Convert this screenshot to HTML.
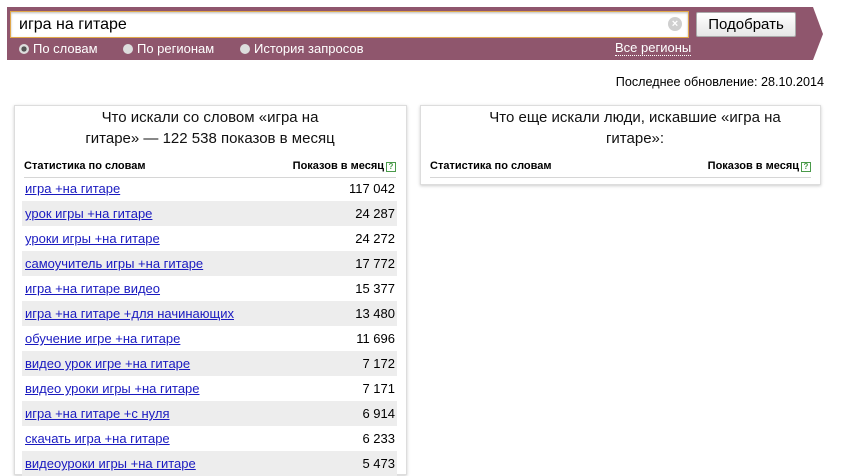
<!DOCTYPE html>
<html><head><meta charset="utf-8"><style>
*{margin:0;padding:0;box-sizing:border-box}
body{width:841px;height:464px;overflow:hidden;background:#fff;font-family:"Liberation Sans",Arial,sans-serif;position:relative;color:#000}
.a{position:absolute}
.bar{left:7px;top:7px;width:816px;height:53px;background:#8f566d;clip-path:polygon(0 0,806px 0,816px 27px,806px 53px,0 53px)}
.inp{left:10px;top:11px;width:679px;height:27px;background:#fff;border:1px solid #e0a74a;box-shadow:inset 0 1px 2px #bbb;font-size:16px;padding:4px 8px;color:#000}
.clr{left:668px;top:17px;width:14px;height:14px;border-radius:50%;background:#cfcfcf;color:#fff;font-size:11px;line-height:14px;text-align:center;font-weight:bold}
.btn{left:696px;top:12px;width:100px;height:25px;background:linear-gradient(#fff,#e6e6e6);border:1px solid #aaa;border-radius:2px;font-size:15px;text-align:center;line-height:23px;color:#000}
.rad{top:41px;font-size:13px;color:#fff;white-space:nowrap}
.rad i{display:inline-block;width:10px;height:10px;border-radius:50%;background:#ddd;vertical-align:-1px;margin-right:4px}
.upd{right:17px;top:75px;font-size:12.6px}
.panel{border:1px solid #ddd;box-shadow:0 1px 3px #ccc;background:#fff}
.ttl{font-size:15px;text-align:center;line-height:21px;color:#111}
.hd{font-size:11px;font-weight:bold;height:18px;border-bottom:1px solid #d6d6d6}
.hd .r{position:absolute;right:0;top:0}
.q{display:inline-block;width:10px;height:10px;border:1px solid #4a9a4a;color:#4a9a4a;font-size:8px;line-height:8px;text-align:center;vertical-align:0;margin-left:2px}
.row{position:absolute;left:22px;width:375px;height:25px;font-size:13px;line-height:25px;padding-left:3px}
.row.g{background:#ededed}
.row a{color:#1a1ac0;text-decoration:underline}
.row span{position:absolute;right:2px;top:0}
</style></head><body>
<div class="a bar"></div>
<div class="a inp">игра на гитаре</div>
<div class="a clr">×</div>
<div class="a btn">Подобрать</div>
<div class="a rad" style="left:19px"><i style="background:radial-gradient(#555 35%,#ddd 40%)"></i>По словам</div>
<div class="a rad" style="left:123px"><i></i>По регионам</div>
<div class="a rad" style="left:240px"><i></i>История запросов</div>
<div class="a rad" style="left:615px;border-bottom:1px dotted #fff;line-height:14px">Все регионы</div>
<div class="a upd">Последнее обновление: 28.10.2014</div>

<div class="a panel" style="left:14px;top:105px;width:393px;height:370px"></div>
<div class="a ttl" style="left:74px;top:107px;width:272px">Что искали со словом «игра на гитаре» — 122 538 показов в месяц</div>
<div class="a hd" style="left:24px;top:160px;width:372px">Статистика по словам<span class="r">Показов в месяц<span class="q">?</span></span></div>

<div class="a panel" style="left:420px;top:105px;width:401px;height:80px"></div>
<div class="a ttl" style="left:470px;top:107px;width:330px">Что еще искали люди, искавшие «игра на гитаре»:</div>
<div class="a hd" style="left:430px;top:160px;width:381px">Статистика по словам<span class="r">Показов в месяц<span class="q">?</span></span></div>

<div class="row" style="top:176px"><a>игра +на гитаре</a><span>117 042</span></div>
<div class="row g" style="top:201px"><a>урок игры +на гитаре</a><span>24 287</span></div>
<div class="row" style="top:226px"><a>уроки игры +на гитаре</a><span>24 272</span></div>
<div class="row g" style="top:251px"><a>самоучитель игры +на гитаре</a><span>17 772</span></div>
<div class="row" style="top:276px"><a>игра +на гитаре видео</a><span>15 377</span></div>
<div class="row g" style="top:301px"><a>игра +на гитаре +для начинающих</a><span>13 480</span></div>
<div class="row" style="top:326px"><a>обучение игре +на гитаре</a><span>11 696</span></div>
<div class="row g" style="top:351px"><a>видео урок игре +на гитаре</a><span>7 172</span></div>
<div class="row" style="top:376px"><a>видео уроки игры +на гитаре</a><span>7 171</span></div>
<div class="row g" style="top:401px"><a>игра +на гитаре +с нуля</a><span>6 914</span></div>
<div class="row" style="top:426px"><a>скачать игра +на гитаре</a><span>6 233</span></div>
<div class="row g" style="top:451px"><a>видеоуроки игры +на гитаре</a><span>5 473</span></div>
</body></html>
